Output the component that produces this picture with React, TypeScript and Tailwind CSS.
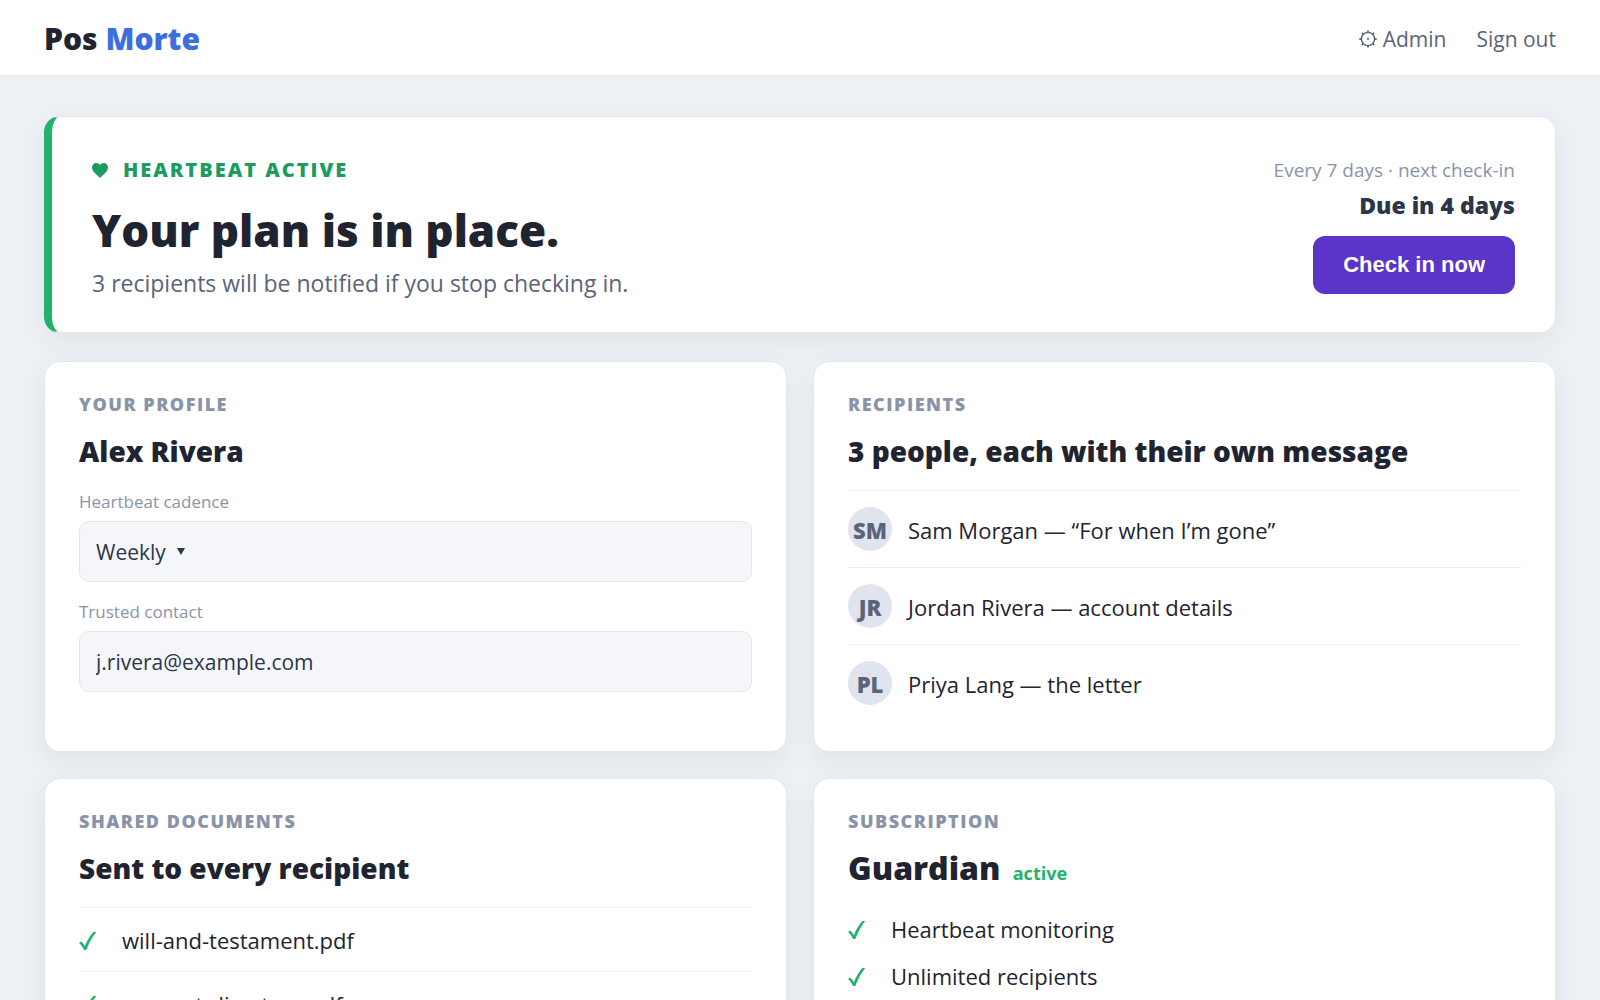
import { useState } from 'react';
import type { ReactNode } from 'react';

const recipients = [
  { initials: 'SM', text: 'Sam Morgan — “For when I’m gone”' },
  { initials: 'JR', text: 'Jordan Rivera — account details' },
  { initials: 'PL', text: 'Priya Lang — the letter' },
];

const documents = ['will-and-testament.pdf', 'account-directory.pdf'];

const features = ['Heartbeat monitoring', 'Unlimited recipients'];

function GearIcon() {
  return (
    <svg viewBox="0 0 18 18" className="size-[18px]" fill="none" stroke="currentColor" strokeWidth="1.4" aria-hidden="true">
      <circle cx="9" cy="9" r="6.6" />
      <circle cx="9" cy="9" r="1.1" fill="currentColor" stroke="none" />
      <path
        strokeWidth="1.8"
        d="M9 2.4V.4M9 17.600v-2M2.400 9H.4M17.600 9h-2M4.300 4.300 2.900 2.900M15.100 15.100l-1.400-1.400M4.300 13.700l-1.400 1.400M15.100 2.900l-1.400 1.400"
      />
    </svg>
  );
}

function HeartIcon() {
  return (
    <svg viewBox="0 0 16 15" className="h-[15px] w-4" fill="currentColor" aria-hidden="true">
      <path d="M8 15C5.500 12.200 0 8.800 0 4.500 0 2 1.700 0 4.200 0 6 0 7.400.8 8 2.200 8.600.8 10 0 11.800 0 14.300 0 16 2 16 4.500 16 8.800 10.500 12.200 8 15z" />
    </svg>
  );
}

function CheckIcon() {
  return (
    <svg viewBox="0 0 18 20" className="h-5 w-[18px] shrink-0 text-[#22b26b]" fill="currentColor" aria-hidden="true">
      <path d="M0 12 2.200 10.600C3.800 12 5 13.500 5.900 15.200 8.100 9.500 11 4.800 14.300 1H17.200C13 6.400 9.800 12.400 7.300 19H5C3.800 16.300 2.200 14 0 12z" />
    </svg>
  );
}

function Card({ label, children }: { label: string; children: ReactNode }) {
  return (
    <section className="rounded-2xl border border-[#e2e7ee] bg-white px-[34px] pt-7 pb-[30px] shadow-[0_8px_28px_rgba(20,40,40,0.06)]">
      <h2 className="mb-3 text-[18px] leading-7 font-extrabold tracking-[1.5px] text-[#8a94a8] uppercase">{label}</h2>
      {children}
    </section>
  );
}

export default function App() {
  const [cadence, setCadence] = useState('Weekly');
  const [contact, setContact] = useState('j.rivera@example.com');

  return (
    <div className="min-h-screen bg-[#edf0f5] font-['Open_Sans','Noto_Sans',sans-serif] text-[#1f2430]">
      <header className="flex h-[76px] items-center justify-between border-b border-[#e2e7ee] bg-white px-11 pt-0.5">
        <a href="#" className="text-[30px] leading-10 font-extrabold">
          Pos <span className="text-[#3b6fe0]">Morte</span>
        </a>
        <nav className="flex items-center gap-[30px] text-[21px] leading-8 text-[#5b6478]">
          <a href="#admin" className="flex items-center gap-1.5">
            <GearIcon />
            Admin
          </a>
          <a href="#signout">Sign out</a>
        </nav>
      </header>

      <main className="px-11 py-10">
        <section className="flex items-start justify-between rounded-2xl border border-l-8 border-[#e2e7ee] border-l-[#22b26b] bg-white px-10 pt-9 pb-[31px] shadow-[0_8px_28px_rgba(20,40,40,0.06)]">
          <div>
            <p className="flex items-center gap-[15px] text-[20px] leading-[34px] font-extrabold tracking-widest text-[#1c9c5e] uppercase">
              <HeartIcon />
              Heartbeat active
            </p>
            <h1 className="mt-3 text-[44px] leading-[62px] font-extrabold">Your plan is in place.</h1>
            <p className="mt-1 text-[23px] leading-9 text-[#5b6478]">
              3 recipients will be notified if you stop checking in.
            </p>
          </div>
          <div className="flex flex-col items-end">
            <p className="text-[19px] leading-[34px] text-[#8a94a8]">Every 7 days · next check-in</p>
            <p className="text-[23px] leading-9 font-extrabold text-[#2d3548]">Due in 4 days</p>
            <button
              type="button"
              className="mt-[13px] h-[58px] rounded-xl bg-[#5b34c8] px-[30px] pb-0.5 font-['Liberation_Sans',sans-serif] text-[22px] font-bold text-white"
            >
              Check in now
            </button>
          </div>
        </section>

        <div className="mt-7 grid grid-cols-2 gap-[26px]">
          <Card label="Your profile">
            <h3 className="text-[28px] leading-[42px] font-extrabold">Alex Rivera</h3>
            <label htmlFor="cadence" className="mt-4 block text-[17px] leading-7 text-[#8a94a8]">
              Heartbeat cadence
            </label>
            <div className="mt-[5px] flex h-[61px] items-center gap-[11px] rounded-[10px] border border-[#e2e7ee] bg-[#f4f6fa] px-4 text-[#2d3548]">
              <select
                id="cadence"
                value={cadence}
                onChange={(e) => setCadence(e.target.value)}
                className="field-sizing-content appearance-none bg-transparent text-[21px] leading-8 outline-none"
              >
                <option>Weekly</option>
                <option>Monthly</option>
              </select>
              <svg viewBox="0 0 8 7" className="h-[7px] w-2" fill="currentColor" aria-hidden="true">
                <path d="M0 0h8L4 7z" />
              </svg>
            </div>
            <label htmlFor="contact" className="mt-4 block text-[17px] leading-7 text-[#8a94a8]">
              Trusted contact
            </label>
            <input
              id="contact"
              type="email"
              value={contact}
              onChange={(e) => setContact(e.target.value)}
              className="mt-[5px] h-[61px] w-full rounded-[10px] border border-[#e2e7ee] bg-[#f4f6fa] px-4 text-[21px] text-[#2d3548] outline-none"
            />
          </Card>

          <Card label="Recipients">
            <h3 className="text-[28px] leading-[42px] font-extrabold">3 people, each with their own message</h3>
            <ul className="mt-[18px]">
              {recipients.map((r) => (
                <li key={r.initials} className="flex items-center gap-4 border-t border-[#eceff4] py-4">
                  <span className="flex size-11 shrink-0 items-center justify-center rounded-full bg-[#dfe4ef] pt-0.5 text-[22px] font-extrabold text-[#5b6478]">
                    {r.initials}
                  </span>
                  <span className="pt-0.5 text-[22px] leading-8">{r.text}</span>
                </li>
              ))}
            </ul>
          </Card>

          <Card label="Shared documents">
            <h3 className="text-[28px] leading-[42px] font-extrabold">Sent to every recipient</h3>
            <ul className="mt-[18px]">
              {documents.map((doc) => (
                <li key={doc} className="flex items-center gap-[25px] border-t border-[#eceff4] pt-[17px] pb-[15px]">
                  <CheckIcon />
                  <span className="text-[22px] leading-[31px]">{doc}</span>
                </li>
              ))}
            </ul>
          </Card>

          <Card label="Subscription">
            <h3 className="text-[32px] leading-[42px] font-extrabold">
              Guardian <span className="ml-1 text-[18px] font-bold text-[#22b26b]">active</span>
            </h3>
            <ul className="mt-3">
              {features.map((feature) => (
                <li key={feature} className="flex items-center gap-[25px] py-2">
                  <CheckIcon />
                  <span className="text-[22px] leading-[31px]">{feature}</span>
                </li>
              ))}
            </ul>
          </Card>
        </div>
      </main>
    </div>
  );
}
